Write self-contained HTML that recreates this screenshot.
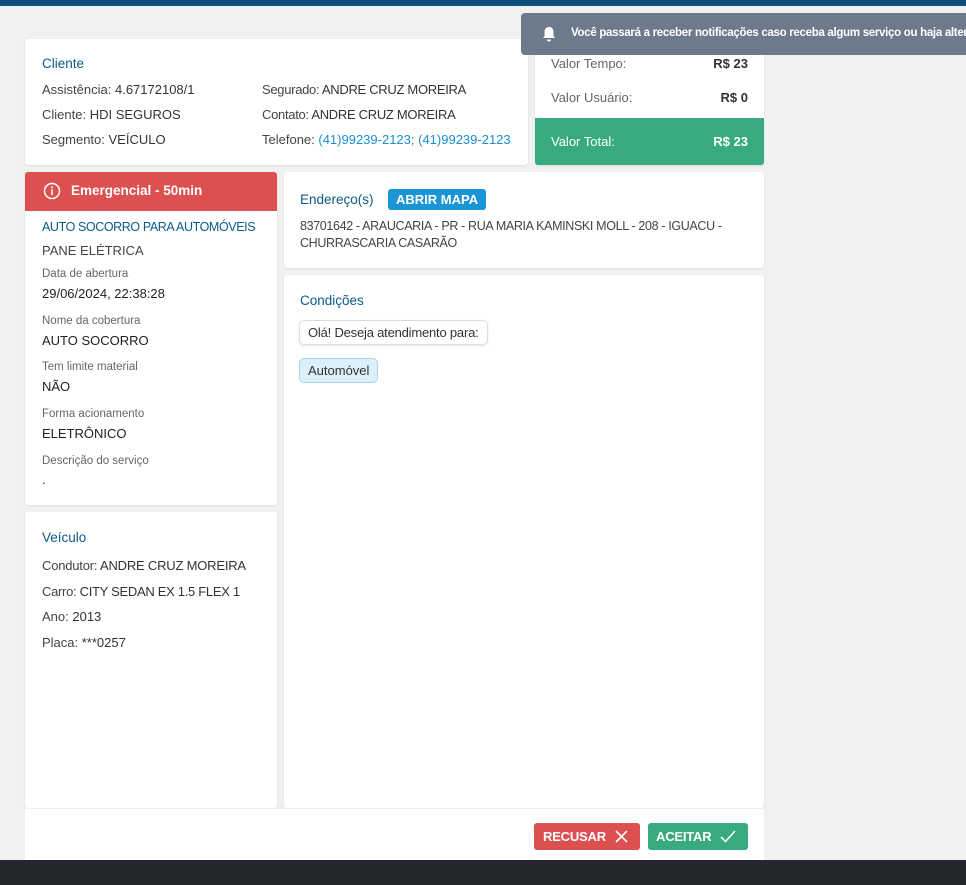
<!DOCTYPE html><html><head><meta charset="utf-8"><style>
*{box-sizing:border-box;margin:0;padding:0}
body{width:966px;height:885px;background:#f1f1f1;font-family:"Liberation Sans",sans-serif;font-size:13px;color:#444;position:relative;overflow:hidden}
.card{position:absolute;background:#fff;border-radius:3px;box-shadow:0 1px 2px rgba(0,0,0,.08)}
.t{color:#0b5a8a;font-size:13.5px}
.a{position:absolute;white-space:nowrap}
.lbl{font-size:11.5px;color:#666}
.val{font-size:13px;color:#222}
.blue{color:#1a8fd0}
</style></head><body>
<div style="position:absolute;left:0;top:0;width:966px;height:6px;background:#0b4f7c"></div>
<div class="card" style="left:25px;top:39px;width:503px;height:126px">
<div class="a t" style="left:17px;top:17px">Cliente</div>
<div class="a" style="left:17px;top:43px">Assistência: <span style="color:#333">4.67172108/1</span></div>
<div class="a" style="left:17px;top:68px">Cliente: <span style="color:#333">HDI SEGUROS</span></div>
<div class="a" style="left:17px;top:93px">Segmento: <span style="color:#333">VEÍCULO</span></div>
<div class="a" style="left:237px;top:43px;letter-spacing:-0.3px">Segurado: <span style="color:#333">ANDRE CRUZ MOREIRA</span></div>
<div class="a" style="left:237px;top:68px;letter-spacing:-0.3px">Contato: <span style="color:#333">ANDRE CRUZ MOREIRA</span></div>
<div class="a" style="left:237px;top:93px">Telefone: <span class="blue">(41)99239-2123; (41)99239-2123</span></div>
</div>
<div class="card" style="left:535px;top:39px;width:229px;height:126px;overflow:hidden">
<div class="a" style="left:16px;top:17px;color:#666">Valor Tempo:</div><div class="a" style="right:16px;top:17px;font-weight:bold;color:#333">R$ 23</div>
<div class="a" style="left:16px;top:51px;color:#666">Valor Usuário:</div><div class="a" style="right:16px;top:51px;font-weight:bold;color:#333">R$ 0</div>
<div style="position:absolute;left:0;top:79px;width:229px;height:47px;background:#37ab7f;color:#fff">
<div class="a" style="left:16px;top:16px">Valor Total:</div><div class="a" style="right:16px;top:16px;font-weight:bold">R$ 23</div></div>
</div>
<div style="position:absolute;left:521px;top:13px;width:460px;height:42px;background:#6c7a8c;border-radius:4px;color:#fff;font-size:11.5px;font-weight:bold">
<svg style="position:absolute;left:21px;top:13px" width="14" height="16" viewBox="0 0 14 16"><path d="M7 1c-3 0-4.5 2.2-4.5 5v4L1 12h12l-1.5-2V6C11.5 3.2 10 1 7 1z M5 13.5a2 2 0 0 0 4 0z" fill="#fff"/></svg>
<div class="a" style="left:50px;top:14px;letter-spacing:-0.3px">Você passará a receber notificações caso receba algum serviço ou haja alteração</div></div>
<div class="card" style="left:25px;top:172px;width:252px;height:333px;overflow:hidden">
<div style="height:39px;background:#dc5050;color:#fff;font-weight:bold;font-size:13.5px;padding:11px 0 0 46px;position:relative">
<svg style="position:absolute;left:18px;top:10px" width="18" height="18" viewBox="0 0 18 18"><circle cx="9" cy="9" r="7.5" fill="none" stroke="#fff" stroke-width="1.5"/><rect x="8.2" y="7.5" width="1.6" height="5.5" fill="#fff"/><rect x="8.2" y="4.5" width="1.6" height="1.7" fill="#fff"/></svg>Emergencial - 50min</div>
<div class="a t" style="left:17px;top:48px;font-size:12.5px;letter-spacing:-0.4px">AUTO SOCORRO PARA AUTOMÓVEIS</div>
<div class="a val" style="left:17px;top:71px;color:#444">PANE ELÉTRICA</div>
<div class="a lbl" style="left:17px;top:96px">Data de abertura</div><div class="a val" style="left:17px;top:114px">29/06/2024, 22:38:28</div>
<div class="a lbl" style="left:17px;top:143px">Nome da cobertura</div><div class="a val" style="left:17px;top:161px">AUTO SOCORRO</div>
<div class="a lbl" style="left:17px;top:189px">Tem limite material</div><div class="a val" style="left:17px;top:207px">NÃO</div>
<div class="a lbl" style="left:17px;top:236px">Forma acionamento</div><div class="a val" style="left:17px;top:254px">ELETRÔNICO</div>
<div class="a lbl" style="left:17px;top:283px">Descrição do serviço</div><div class="a val" style="left:17px;top:300px">.</div>
</div>
<div class="card" style="left:284px;top:172px;width:480px;height:96px">
<div class="a t" style="left:16px;top:20px">Endereço(s)</div>
<div class="a" style="left:104px;top:17px;background:#1a95d6;color:#fff;font-weight:bold;padding:3px 8px;border-radius:3px;font-size:13px">ABRIR MAPA</div>
<div class="a" style="left:16px;top:46px;line-height:17px;font-size:12.5px;letter-spacing:-0.35px">83701642 - ARAUCARIA - PR - RUA MARIA KAMINSKI MOLL - 208 - IGUACU -<br>CHURRASCARIA CASARÃO</div>
</div>
<div class="card" style="left:284px;top:275px;width:480px;height:533px">
<div class="a t" style="left:16px;top:18px">Condições</div>
<div class="a" style="left:15px;top:45px;border:1px solid #ddd;border-radius:5px;padding:4px 8px;box-shadow:0 1px 2px rgba(0,0,0,.1);color:#333;letter-spacing:-0.2px">Olá! Deseja atendimento para:</div>
<div class="a" style="left:15px;top:83px;border:1px solid #a9d3ea;background:#dcf0fa;border-radius:5px;padding:4px 8px;color:#333">Automóvel</div>
</div>
<div class="card" style="left:25px;top:512px;width:252px;height:296px">
<div class="a t" style="left:17px;top:18px">Veículo</div>
<div class="a" style="left:17px;top:46px;letter-spacing:-0.2px">Condutor: <span style="color:#333">ANDRE CRUZ MOREIRA</span></div>
<div class="a" style="left:17px;top:72px;letter-spacing:-0.3px">Carro: <span style="color:#333">CITY SEDAN EX 1.5 FLEX 1</span></div>
<div class="a" style="left:17px;top:97px">Ano: <span style="color:#333">2013</span></div>
<div class="a" style="left:17px;top:123px">Placa: <span style="color:#333">***0257</span></div>
</div>
<div style="position:absolute;left:25px;top:808px;width:739px;height:52px;background:#fff;border-top:1px solid #eee">
<div class="a" style="left:509px;top:14px;width:106px;height:27px;background:#dc5050;border-radius:3px;color:#fff;font-weight:bold;padding:6px 0 0 9px;letter-spacing:-0.2px">RECUSAR
<svg style="position:absolute;left:81px;top:7px" width="13" height="13" viewBox="0 0 13 13"><path d="M1 1L12 12M12 1L1 12" stroke="#fff" stroke-width="1.6"/></svg></div>
<div class="a" style="left:623px;top:14px;width:100px;height:27px;background:#37ab7f;border-radius:3px;color:#fff;font-weight:bold;padding:6px 0 0 8px;letter-spacing:-0.2px">ACEITAR
<svg style="position:absolute;left:72px;top:7px" width="16" height="13" viewBox="0 0 16 13"><path d="M1 7L5.5 11.5L15 1" fill="none" stroke="#fff" stroke-width="1.6"/></svg></div>
</div>
<div style="position:absolute;left:0;top:860px;width:966px;height:25px;background:#23262b"></div>
</body></html>
